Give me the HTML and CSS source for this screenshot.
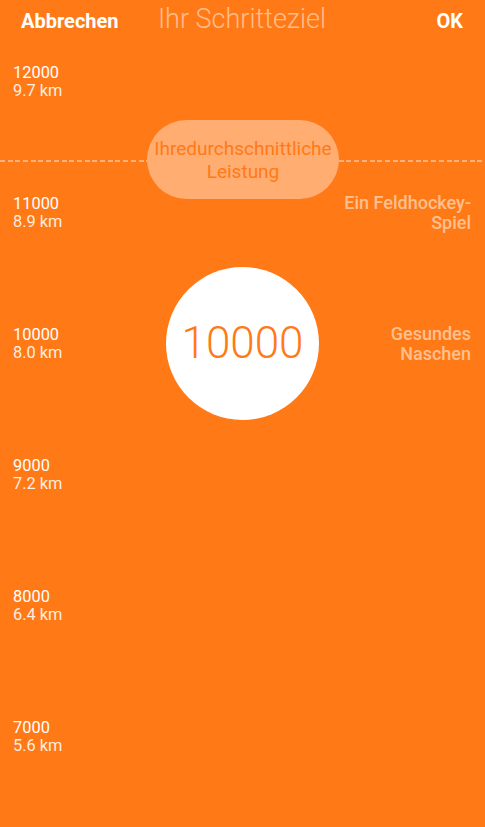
FILE: index.html
```html
<!DOCTYPE html>
<html lang="de">
<head>
<meta charset="utf-8">
<title>Ihr Schritteziel</title>
<link rel="stylesheet" href="styles.css">
</head>
<body>
<div class="screen">
  <header class="topbar">
    <span class="action action-left">Abbrechen</span>
    <span class="title">Ihr Schritteziel</span>
    <span class="action action-right">OK</span>
  </header>

  <div class="scale">
    <div class="row">
      <div class="mark"><span class="steps">12000</span><span class="dist">9.7 km</span></div>
    </div>
    <div class="row">
      <div class="mark"><span class="steps">11000</span><span class="dist">8.9 km</span></div>
      <div class="hint">Ein Feldhockey-<br>Spiel</div>
    </div>
    <div class="row">
      <div class="mark"><span class="steps">10000</span><span class="dist">8.0 km</span></div>
      <div class="hint">Gesundes<br>Naschen</div>
    </div>
    <div class="row">
      <div class="mark"><span class="steps">9000</span><span class="dist">7.2 km</span></div>
    </div>
    <div class="row">
      <div class="mark"><span class="steps">8000</span><span class="dist">6.4 km</span></div>
    </div>
    <div class="row">
      <div class="mark"><span class="steps">7000</span><span class="dist">5.6 km</span></div>
    </div>
  </div>

  <div class="avg-line"></div>
  <div class="avg-pill">Ihredurchschnittliche<br>Leistung</div>
  <div class="goal-knob">10000</div>
</div>
</body>
</html>
```

FILE: styles.css
```css
html, body {
  margin: 0;
  padding: 0;
  background: #ff7a17;
}

.screen {
  position: relative;
  width: 485px;
  height: 827px;
  overflow: hidden;
  background: #ff7a17;
  font-family: Roboto, "Noto Sans", "Liberation Sans", sans-serif;
  color: #ffffff;
}

.topbar {
  display: grid;
  grid-template-columns: 1fr auto 1fr;
  align-items: baseline;
  height: 38px;
  padding: 0 22px 0 21px;
}

.action {
  font-size: 20px;
  font-weight: 700;
  line-height: 38px;
  color: #ffffff;
}

.action-left {
  justify-self: start;
}

.action-right {
  justify-self: end;
}

.title {
  font-size: 27px;
  font-weight: 300;
  line-height: 38px;
  color: #ffbd8c;
}

.scale {
  padding-top: 26px;
}

.row {
  display: flex;
  justify-content: space-between;
  align-items: flex-start;
  height: 131px;
}

.mark {
  display: flex;
  flex-direction: column;
  padding-left: 13px;
  font-size: 16.4px;
  line-height: 18px;
}

.steps {
  color: #ffffff;
}

.dist {
  color: rgba(255, 255, 255, 0.88);
}

.hint {
  margin-top: -2px;
  padding-right: 14px;
  text-align: right;
  font-size: 18px;
  font-weight: 500;
  line-height: 20px;
  color: #ffc08f;
}

.avg-line {
  position: absolute;
  left: 0;
  right: 0;
  top: 160px;
  height: 1.5px;
  background: repeating-linear-gradient(to right, #ffb27e 0 5px, transparent 5px 7.7px);
}

.avg-pill {
  position: absolute;
  left: 147px;
  top: 120px;
  width: 192px;
  height: 79px;
  border-radius: 40px;
  background: #ffad71;
  color: #ff7a17;
  font-size: 19px;
  line-height: 23px;
  display: flex;
  align-items: center;
  justify-content: center;
  text-align: center;
}

.goal-knob {
  position: absolute;
  left: 166px;
  top: 266.5px;
  width: 153px;
  height: 153px;
  border-radius: 50%;
  background: #ffffff;
  color: #ff7a17;
  font-size: 44px;
  font-weight: 300;
  display: flex;
  align-items: center;
  justify-content: center;
}
```
